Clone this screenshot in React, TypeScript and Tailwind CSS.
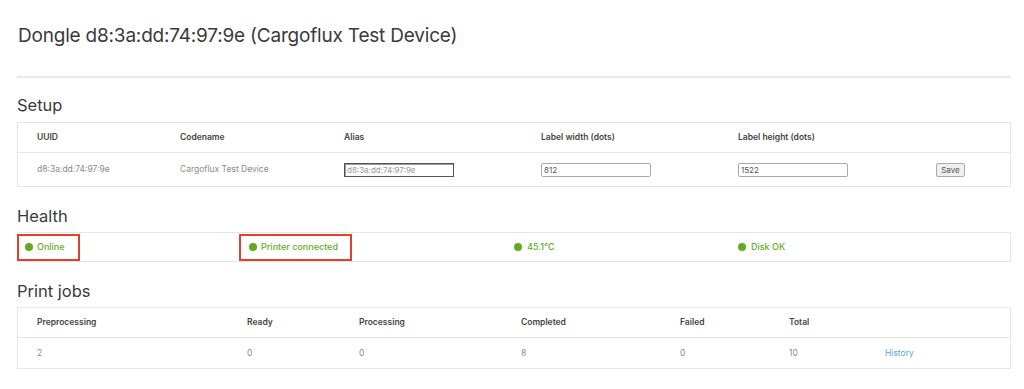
import React from "react";

const font = { fontFamily: "Inter, 'Noto Sans', sans-serif" };

function Dot() {
  return <span className="inline-block w-[8px] h-[8px] rounded-full bg-[#5fad1f]" />;
}

export default function App() {
  return (
    <div className="w-[1024px] h-[389px] bg-white overflow-hidden text-[#333]" style={font}>
      <div className="pl-[17px] w-[1011px]">
        <h1 className="pt-[24px] pl-[1px] text-[19px] leading-[24px] tracking-[-0.2px] text-[#3a3a3a] font-normal">
          Dongle d8:3a:dd:74:97:9e (Cargoflux Test Device)
        </h1>
        <div className="mt-[28px] h-[2px] bg-[#e8e8e8]" />

        <h2 className="mt-[17px] text-[16.5px] leading-[20px] text-[#3a3a3a]">Setup</h2>
        <div className="mt-[7px] border border-[#e6e6e6]">
          <div className="grid grid-cols-[143px_164px_197px_197px_198px_1fr] h-[30px] items-center border-b border-[#e6e6e6] text-[8.5px] font-semibold text-[#444]">
            <div className="pl-[19px]">UUID</div>
            <div className="pl-[19px]">Codename</div>
            <div className="pl-[19px]">Alias</div>
            <div className="pl-[19px]">Label width (dots)</div>
            <div className="pl-[19px]">Label height (dots)</div>
            <div />
          </div>
          <div className="grid grid-cols-[143px_164px_197px_197px_198px_1fr] h-[33px] items-center text-[8.5px] text-[#8a8a8a]">
            <div className="pl-[19px]">d8:3a:dd:74:97:9e</div>
            <div className="pl-[19px]">Cargoflux Test Device</div>
            <div className="pl-[19px]">
              <div className="w-[110px] h-[14px] border border-[#555] shadow-[inset_1px_1px_0_#999] flex items-center pl-[2px] text-[8px] text-[#999]">
                d8:3a:dd:74:97:9e
              </div>
            </div>
            <div className="pl-[19px]">
              <div className="w-[110px] h-[14px] border border-[#aaa] rounded-[2px] flex items-center pl-[2px] text-[8px] text-[#555]">
                812
              </div>
            </div>
            <div className="pl-[19px]">
              <div className="w-[110px] h-[14px] border border-[#aaa] rounded-[2px] flex items-center pl-[2px] text-[8px] text-[#555]">
                1522
              </div>
            </div>
            <div className="pl-[19px]">
              <div className="w-[29px] h-[14px] border border-[#aaa] rounded-[2px] bg-[#efefef] flex items-center justify-center text-[8px] text-[#555]">
                Save
              </div>
            </div>
          </div>
        </div>

        <h2 className="mt-[19px] text-[16.5px] leading-[20px] text-[#3a3a3a]">Health</h2>
        <div className="mt-[6px] border border-[#e6e6e6] h-[30px] grid grid-cols-[222px_264px_224px_1fr] items-center text-[9px] font-medium text-[#5fad1f]">
          <div className="flex">
            <div className="-ml-[1px] flex items-center gap-[4px] h-[27px] border-2 border-[#e2402a] pl-[6px] pr-[13px]">
              <Dot />
              <span>Online</span>
            </div>
          </div>
          <div className="flex">
            <div className="-ml-[1px] flex items-center gap-[4px] h-[27px] border-2 border-[#e2402a] pl-[8px] pr-[12px]">
              <Dot />
              <span>Printer connected</span>
            </div>
          </div>
          <div className="flex items-center gap-[5px] pl-[10px]">
            <Dot />
            <span>45.1°C</span>
          </div>
          <div className="flex items-center gap-[5px] pl-[10px]">
            <Dot />
            <span>Disk OK</span>
          </div>
        </div>

        <h2 className="mt-[19px] text-[16.5px] leading-[20px] text-[#3a3a3a]">Print jobs</h2>
        <div className="mt-[6px] border border-[#e6e6e6]">
          <div className="grid grid-cols-[210px_112px_162px_159px_109px_96px_1fr] h-[30px] items-center border-b border-[#e6e6e6] text-[8.5px] font-semibold text-[#444]">
            <div className="pl-[19px]">Preprocessing</div>
            <div className="pl-[19px]">Ready</div>
            <div className="pl-[19px]">Processing</div>
            <div className="pl-[19px]">Completed</div>
            <div className="pl-[19px]">Failed</div>
            <div className="pl-[19px]">Total</div>
            <div />
          </div>
          <div className="grid grid-cols-[210px_112px_162px_159px_109px_96px_1fr] h-[30px] items-center text-[8.5px] text-[#8a8a8a]">
            <div className="pl-[19px]">2</div>
            <div className="pl-[19px]">0</div>
            <div className="pl-[19px]">0</div>
            <div className="pl-[19px]">8</div>
            <div className="pl-[19px]">0</div>
            <div className="pl-[19px]">10</div>
            <div className="pl-[19px] text-[#5ba3d6]">History</div>
          </div>
        </div>
      </div>
    </div>
  );
}
